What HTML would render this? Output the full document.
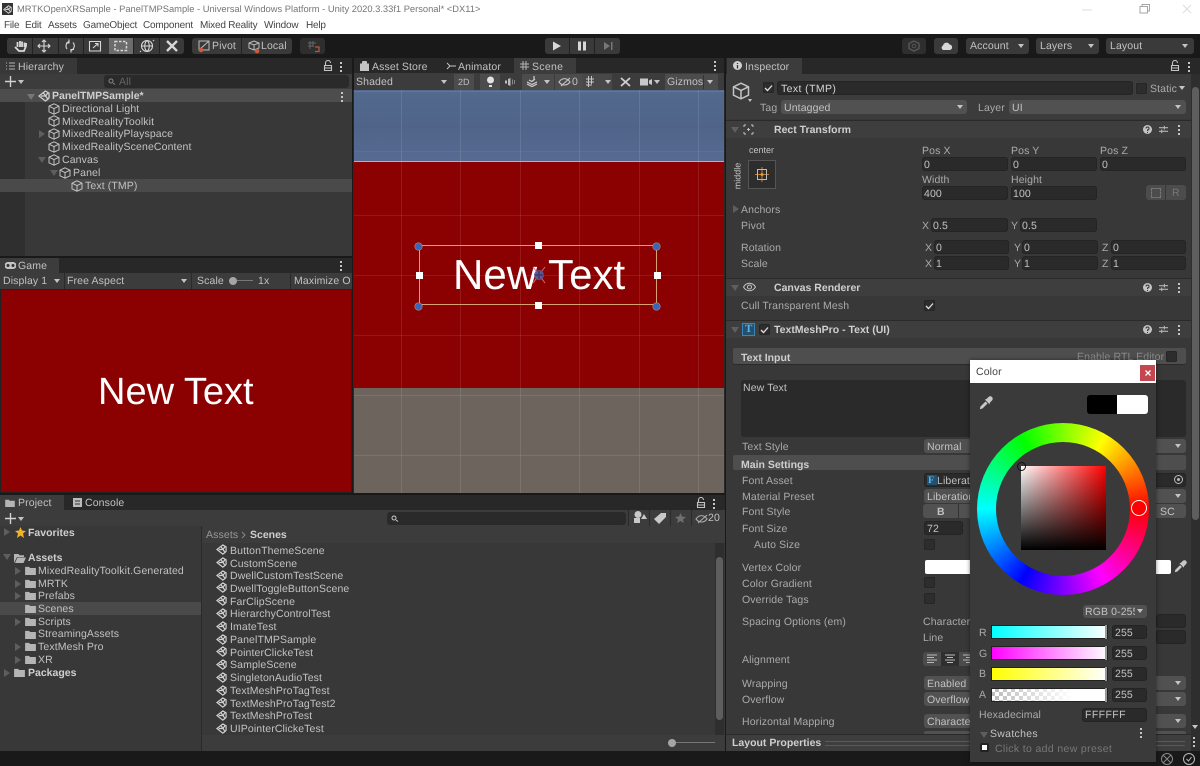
<!DOCTYPE html>
<html><head><meta charset="utf-8">
<style>
html,body{margin:0;padding:0;width:1200px;height:766px;overflow:hidden;background:#191919}
#r{position:relative;width:1200px;height:766px;overflow:hidden;font:10.5px/14px "Liberation Sans",sans-serif;color:#c2c2c2;text-rendering:geometricPrecision;filter:blur(.25px)}
#r div,#r span,#r svg{position:absolute}
.t{white-space:nowrap;letter-spacing:.12px;line-height:14px;margin-top:1px}
.m{color:#444;font-size:10px;letter-spacing:-.2px}
.b{font-weight:bold;color:#cfcfcf;letter-spacing:0}
.f{background:#2a2a2a;border-radius:3px;box-shadow:inset 0 0 0 1px #242424;height:14px}
.p{background:#515151;border-radius:3px;height:14px}
.c{background:#2d2d2d;border-radius:2px;width:11px;height:11px;box-shadow:inset 0 0 0 1px #262626}
.dn{width:0;height:0;border-left:3.5px solid transparent;border-right:3.5px solid transparent;border-top:4px solid #c4c4c4}
.rt{width:0;height:0;border-top:4px solid transparent;border-bottom:4px solid transparent;border-left:6px solid #5e5e5e}
.gd{width:0;height:0;border-left:4px solid transparent;border-right:4px solid transparent;border-top:6px solid #5e5e5e}
.v{background:rgba(255,255,255,.1);width:1px}
.h{background:rgba(255,255,255,.09);height:1px}
.d{width:2px;height:2px;background:#c4c4c4;box-shadow:0 4px 0 #c4c4c4,0 8px 0 #c4c4c4}
.sq{width:7px;height:7px;background:#fff}
.bl{width:7px;height:7px;border-radius:50%;background:#3c66b4;box-shadow:0 0 0 .5px #8aa}
.sl{left:991px;width:117px;height:14px;box-shadow:inset 0 0 0 1px #222}
.sl2{left:1105px;width:2px;height:14px;background:#999}
</style></head><body>
<svg width="0" height="0" style="position:absolute">
<defs>
<symbol id="cube" viewBox="0 0 12 12"><path d="M6 .8 11 3.2V8.8L6 11.2 1 8.8V3.2ZM1 3.2 6 5.6 11 3.2M6 5.6V11.2" fill="none" stroke="#c4c4c4" stroke-width="1"/></symbol>
<symbol id="scn" viewBox="0 0 12 12"><path d="M7.4 1 11 3.1V7.9L9.8 9.3 7.4 11 1 6ZM3 6H7.6L9.7 3M7.6 6 9.7 9M5.5 3 7.6 6" fill="none" stroke="#d0d0d0" stroke-width="1.3"/></symbol>
<symbol id="fld" viewBox="0 0 12 10"><path d="M0 1H4.500L5.500 2.200H12V10H0Z" fill="#b5b5b5"/></symbol>
<symbol id="lock" viewBox="0 0 10 12"><path d="M2.500 5V3A2.500 2.500 0 0 1 7.500 3M1.500 5.500H8.500V10.500H1.500ZM1.500 8H8.500" fill="none" stroke="#c4c4c4" stroke-width="1.100"/></symbol>
<symbol id="set" viewBox="0 0 10 10"><path d="M0 3H10M0 7H10M6 1V5M3 5V9" stroke="#b5b5b5" stroke-width="1.200" fill="none"/></symbol>
<symbol id="pipet" viewBox="0 0 14 14"><path d="M.8 13.200 1.500 10.500 6.500 5.500 8.500 7.500 3.500 12.500Z" fill="#c8c8c8"/><path d="M5.800 3.500 10.500 8.200 11 6.500 13 4.500A1.800 1.800 0 0 0 9.500 1L7.500 3Z" fill="#c8c8c8"/></symbol>
</defs></svg>
<div id="r">
<!-- title / menu -->
<div style="left:0;top:0;width:1200px;height:34px;background:#fff"></div>
<div style="left:2px;top:3px;width:11px;height:12px;background:#333"></div>
<svg style="left:3px;top:5px" width="9" height="9"><use href="#scn"/></svg>
<span class="t" style="left:17px;top:1px;color:#757575;font-size:9.35px;letter-spacing:0">MRTKOpenXRSample - PanelTMPSample - Universal Windows Platform - Unity 2020.3.33f1 Personal* &lt;DX11&gt;</span>
<span class="t m" style="left:4px;top:18px">File</span>
<span class="t m" style="left:25px;top:18px">Edit</span>
<span class="t m" style="left:48px;top:18px">Assets</span>
<span class="t m" style="left:83px;top:18px">GameObject</span>
<span class="t m" style="left:143px;top:18px">Component</span>
<span class="t m" style="left:200px;top:18px">Mixed Reality</span>
<span class="t m" style="left:264px;top:18px">Window</span>
<span class="t m" style="left:306px;top:18px">Help</span>
<svg style="left:1082px;top:4px" width="110" height="11" fill="none"><path d="M0 6H10M101 1 109 9M109 1 101 9" stroke="#ddd"/><path d="M58 2.500H65.500V9H58ZM60 2.500V.5H67.500V7H65.500" stroke="#a5a5a5"/></svg>
<!-- toolbar -->
<div style="left:0;top:34px;width:1200px;height:24px;background:#191919"></div>
<div style="left:7px;top:38px;width:177px;height:16px;background:#3a3a3a;border-radius:3px"></div>
<div style="left:109px;top:38px;width:24px;height:16px;background:#6c6c6c"></div>
<div style="left:32px;top:38px;width:1px;height:16px;background:#222;box-shadow:26px 0 0 #222,51px 0 0 #222,101px 0 0 #222,127px 0 0 #222"></div>
<svg style="left:7px;top:38px" width="177" height="16" fill="none" stroke="#d8d8d8" stroke-width="1.100">
<path d="M8 9 12 13H17L19 8V5M10.500 9V4M13 9V3M15 9V3.500M17.500 9V4.500" stroke-width="1.800"/>
<path d="M31 8H43M37 2V14M35 4 37 2 39 4M35 12 37 14 39 12M33 6 31 8 33 10M41 6 43 8 41 10"/>
<path d="M60 11A5 5 0 0 1 62 3.500M66 4.500A5 5 0 0 1 64 12.500M62 1.500V5H59M64 14.500V11.500H67"/>
<path d="M82.500 3.500H93.500V13H82.500ZM86 10 91 5.500M88 5.500H91V8.500"/>
<path d="M108 3.500H119.500V12.500H108Z" stroke-dasharray="2.500 1.500" stroke-width="1.500"/>
<circle cx="140" cy="8" r="5.500"/><path d="M134.500 8H145.500M140 2.500C137 5 137 11 140 13.500M140 2.500C143 5 143 11 140 13.500M146 2 147 3M133 13 134 14"/>
<path d="M160 3 170 13M170 3 160 13" stroke-width="2.300"/>
</svg>
<div style="left:192px;top:38px;width:100px;height:16px;background:#3a3a3a;border-radius:3px"></div>
<div style="left:241px;top:38px;width:1px;height:16px;background:#222"></div>
<svg style="left:198px;top:40px" width="14" height="14" fill="none"><path d="M1 1H11V10H1ZM1 10 11 1" stroke="#bdbdbd"/><circle cx="3" cy="10" r="2.300" fill="#d05a3c"/></svg>
<span class="t" style="left:212px;top:38px">Pivot</span>
<svg style="left:248px;top:40px" width="14" height="14" fill="none"><path d="M6 1 11 3V8L6 10 1 8V3ZM1 3 6 5 11 3M6 5V10" stroke="#bdbdbd"/><circle cx="9" cy="11" r="2.300" fill="#d05a3c"/></svg>
<span class="t" style="left:261px;top:38px">Local</span>
<div style="left:300px;top:38px;width:25px;height:16px;background:#2e2e2e;border-radius:3px"></div>
<svg style="left:307px;top:40px" width="13" height="13" fill="none"><path d="M1 3H9M1 6H6M3 1V9M6 1V7" stroke="#666"/><path d="M8 7H12V11.500H8" stroke="#b45a3c" stroke-width="1.300"/></svg>
<div style="left:545px;top:38px;width:75px;height:16px;background:#3a3a3a;border-radius:3px"></div>
<div style="left:569px;top:38px;width:1px;height:16px;background:#222;box-shadow:25px 0 0 #222"></div>
<svg style="left:545px;top:38px" width="75" height="16"><path d="M8 3.500 16 8 8 12.500Z" fill="#d8d8d8"/><path d="M33 3.500H36V12.500H33ZM38 3.500H41V12.500H38Z" fill="#d8d8d8"/><path d="M59 4 65 8 59 12ZM66 4H67.500V12H66Z" fill="#777"/></svg>
<div style="left:902px;top:38px;width:24px;height:16px;background:#2e2e2e;border-radius:3px"></div>
<svg style="left:908px;top:40px" width="12" height="12" fill="none"><path d="M6 1 11 3.500V8.500L6 11 1 8.500V3.500Z" stroke="#555" stroke-width="1.500"/><circle cx="6" cy="6" r="1.800" stroke="#555"/></svg>
<div style="left:934px;top:38px;width:24px;height:16px;background:#3a3a3a;border-radius:3px"></div>
<svg style="left:940px;top:41px" width="13" height="10"><path d="M3 9A2.500 2.500 0 0 1 3 4.500 3.500 3.500 0 0 1 9.500 3.500 2.800 2.800 0 0 1 10 9Z" fill="#d8d8d8"/></svg>
<div style="left:966px;top:38px;width:63px;height:16px;background:#3a3a3a;border-radius:3px"></div>
<span class="t" style="left:970px;top:38px">Account</span><div class="dn" style="left:1018px;top:44px"></div>
<div style="left:1036px;top:38px;width:63px;height:16px;background:#3a3a3a;border-radius:3px"></div>
<span class="t" style="left:1040px;top:38px">Layers</span><div class="dn" style="left:1088px;top:44px"></div>
<div style="left:1106px;top:38px;width:88px;height:16px;background:#3a3a3a;border-radius:3px"></div>
<span class="t" style="left:1110px;top:38px">Layout</span><div class="dn" style="left:1182px;top:44px"></div>

<!-- Hierarchy -->
<div style="left:0;top:58px;width:352px;height:198px;background:#383838"></div>
<div style="left:0;top:58px;width:352px;height:16px;background:#282828"></div>
<div style="left:0;top:58px;width:77px;height:16px;background:#383838"></div>
<svg style="left:6px;top:62px" width="9" height="8"><path d="M0 1H1M3 1H9M0 4H1M3 4H9M0 7H1M3 7H9" stroke="#b5b5b5"/></svg>
<span class="t" style="left:18px;top:59px">Hierarchy</span>
<svg style="left:323px;top:60px" width="10" height="12"><use href="#lock"/></svg>
<div class="d" style="left:340px;top:62px"></div>
<div style="left:0;top:74px;width:352px;height:15px;background:#3c3c3c"></div>
<svg style="left:5px;top:76px" width="11" height="11"><path d="M5.500 0V11M0 5.500H11" stroke="#d0d0d0" stroke-width="1.400"/></svg>
<div class="dn" style="left:18px;top:80px"></div>
<div style="left:104px;top:75px;width:245px;height:13px;background:#2a2a2a;border-radius:3px"></div>
<span class="t" style="left:119px;top:74px;color:#666">All</span>
<svg style="left:108px;top:78px" width="8" height="7" fill="none"><circle cx="3" cy="3" r="2" stroke="#888"/><path d="M5 5 7 6.500" stroke="#888"/></svg>
<div style="left:0;top:89px;width:25px;height:167px;background:#2f2f2f"></div>
<div style="left:0;top:89px;width:352px;height:13px;background:#4d4d4d"></div>
<div style="left:0;top:179px;width:352px;height:13px;background:#4a4a4a"></div>
<div class="gd" style="left:27px;top:94px;border-top-color:#777"></div>
<svg style="left:38px;top:90px" width="12" height="12"><use href="#scn"/></svg>
<span class="t b" style="left:52px;top:88px">PanelTMPSample*</span>
<div class="d" style="left:341px;top:92px"></div>
<svg style="left:48px;top:103px" width="12" height="12"><use href="#cube"/></svg><span class="t" style="left:62px;top:101px">Directional Light</span>
<svg style="left:48px;top:115px" width="12" height="12"><use href="#cube"/></svg><span class="t" style="left:62px;top:114px">MixedRealityToolkit</span>
<div class="rt" style="left:39px;top:130px"></div>
<svg style="left:48px;top:128px" width="12" height="12"><use href="#cube"/></svg><span class="t" style="left:62px;top:126px">MixedRealityPlayspace</span>
<svg style="left:48px;top:141px" width="12" height="12"><use href="#cube"/></svg><span class="t" style="left:62px;top:139px">MixedRealitySceneContent</span>
<div class="gd" style="left:38px;top:157px"></div>
<svg style="left:48px;top:154px" width="12" height="12"><use href="#cube"/></svg><span class="t" style="left:62px;top:152px">Canvas</span>
<div class="gd" style="left:50px;top:170px"></div>
<svg style="left:59px;top:167px" width="12" height="12"><use href="#cube"/></svg><span class="t" style="left:73px;top:165px">Panel</span>
<svg style="left:71px;top:180px" width="12" height="12"><use href="#cube"/></svg><span class="t" style="left:85px;top:178px">Text (TMP)</span>

<!-- Game -->
<div style="left:0;top:258px;width:352px;height:235px;background:#3c3c3c"></div>
<div style="left:0;top:258px;width:352px;height:15px;background:#282828"></div>
<div style="left:0;top:258px;width:59px;height:15px;background:#3c3c3c"></div>
<svg style="left:5px;top:262px" width="11" height="7"><path d="M3 0H8A3 3 0 0 1 8 7H3A3 3 0 0 1 3 0Z" fill="#c4c4c4"/><circle cx="3" cy="3.500" r="1.500" fill="#333"/><circle cx="8" cy="3.500" r="1.500" fill="#333"/></svg>
<span class="t" style="left:18px;top:258px">Game</span>
<div class="d" style="left:340px;top:261px"></div>
<span class="t" style="left:3px;top:273px">Display 1</span><div class="dn" style="left:54px;top:279px"></div>
<span class="t" style="left:67px;top:273px">Free Aspect</span><div class="dn" style="left:181px;top:279px"></div>
<div style="left:64px;top:273px;width:1px;height:16px;background:#2a2a2a;box-shadow:127px 0 0 #2a2a2a,226px 0 0 #2a2a2a"></div>
<span class="t" style="left:197px;top:273px">Scale</span>
<div style="left:229px;top:280px;width:24px;height:1px;background:#777"></div>
<div style="left:229px;top:277px;width:8px;height:8px;border-radius:50%;background:#a5a5a5"></div>
<span class="t" style="left:258px;top:273px">1x</span>
<div style="left:294px;top:273px;width:57px;height:15px;overflow:hidden"><span class="t" style="left:0;top:0">Maximize On Play</span></div>
<div style="left:0;top:289px;width:352px;height:204px;background:#222"></div>
<div style="left:1px;top:290px;width:350px;height:202px;background:#8b0000"></div>
<span class="t" style="left:98px;top:368px;font-size:38px;line-height:46px;color:#fff;letter-spacing:0">New Text</span>

<!-- Scene -->
<div style="left:354px;top:58px;width:370px;height:32px;background:#282828"></div>
<svg style="left:360px;top:61px" width="9" height="10"><path d="M0 3H9V10H0ZM2.500 3V1.500A2 2 0 0 1 6.500 1.500V3" fill="#c4c4c4" stroke="#c4c4c4"/></svg>
<span class="t" style="left:372px;top:59px">Asset Store</span>
<svg style="left:446px;top:62px" width="10" height="8" fill="none"><path d="M1 1 4 4 1 7M4 4H10" stroke="#c4c4c4"/></svg>
<span class="t" style="left:458px;top:59px">Animator</span>
<div style="left:514px;top:58px;width:62px;height:15px;background:#3c3c3c"></div>
<svg style="left:520px;top:61px" width="9" height="9"><path d="M0 3H9M0 6H9M3 0V9M6 0V9" stroke="#b5b5b5"/></svg>
<span class="t" style="left:532px;top:59px;letter-spacing:.3px">Scene</span>
<div class="d" style="left:714px;top:61px"></div>
<div style="left:354px;top:73px;width:370px;height:17px;background:#3c3c3c"></div>
<span class="t" style="left:356px;top:74px">Shaded</span><div class="dn" style="left:441px;top:80px"></div>
<div style="left:454px;top:74px;width:20px;height:16px;background:#4c4c4c"></div>
<span class="t" style="left:458px;top:74px;font-size:9px;letter-spacing:0">2D</span>
<div style="left:480px;top:74px;width:20px;height:16px;background:#4c4c4c"></div>
<svg style="left:486px;top:76px" width="9" height="12"><circle cx="4.500" cy="4" r="3.500" fill="#e2e2e2"/><path d="M3 9H6V11H3Z" fill="#e2e2e2"/></svg>
<svg style="left:505px;top:78px" width="11" height="8"><path d="M0 2.500H2V5.500H0ZM3 1 5.500 0V8L3 7Z" fill="#bbb"/><path d="M7.500 1.500V6.500M9.500 2V6" stroke="#888"/></svg>
<div style="left:522px;top:74px;width:32px;height:16px;background:#4c4c4c"></div>
<svg style="left:526px;top:76px" width="13" height="11" fill="none"><path d="M1 6 6 8.500 11 6M1 8 6 10.500 11 8M3 4 6 5.500 9 3M8 0V4" stroke="#d0d0d0" stroke-width="1.200"/></svg>
<div class="dn" style="left:544px;top:80px"></div>
<div style="left:555px;top:74px;width:27px;height:16px;background:#4c4c4c"></div>
<svg style="left:558px;top:77px" width="14" height="10" fill="none"><path d="M1 5C4 .5 9 .5 12 5 9 9 4 9 1 5ZM3 9 12 1" stroke="#c8c8c8" stroke-width="1.100"/></svg>
<span class="t" style="left:572px;top:74px">0</span>
<div style="left:582px;top:74px;width:30px;height:16px;background:#484848"></div>
<svg style="left:586px;top:76px" width="11" height="12" fill="none"><path d="M0 3H8M0 6H8M0 9H6M2.500 0V11M5.500 0V8" stroke="#c8c8c8"/></svg>
<div class="dn" style="left:605px;top:80px"></div>
<svg style="left:620px;top:77px" width="11" height="10"><path d="M1 1 10 9M10 1 1 9" stroke="#d0d0d0" stroke-width="1.800"/></svg>
<svg style="left:640px;top:78px" width="12" height="8"><path d="M0 .5H8V7.500H0ZM9 2.500 12 1V7L9 5.500Z" fill="#c8c8c8"/></svg>
<div class="dn" style="left:654px;top:80px"></div>
<div style="left:665px;top:74px;width:53px;height:16px;background:#4c4c4c"></div>
<span class="t" style="left:667px;top:74px">Gizmos</span><div class="dn" style="left:707px;top:80px"></div>
<div style="left:703px;top:75px;width:1px;height:14px;background:#333"></div>

<div style="left:353px;top:90px;width:372px;height:403px;background:#2a2a2a"></div>
<div style="left:354px;top:90px;width:370px;height:71px;background:linear-gradient(#526a8e,#4f6488 50%,#566b92)"></div>
<div style="left:354px;top:161px;width:370px;height:1px;background:#b0b0c8"></div>
<div style="left:354px;top:162px;width:370px;height:226px;background:#8b0000"></div>
<div style="left:354px;top:388px;width:370px;height:105px;background:#6d645e"></div>
<div class="v" style="left:401px;top:90px;height:403px"></div>
<div class="v" style="left:460px;top:90px;height:403px"></div>
<div class="v" style="left:520px;top:90px;height:403px"></div>
<div class="v" style="left:579px;top:90px;height:403px"></div>
<div class="v" style="left:639px;top:90px;height:403px"></div>
<div class="v" style="left:698px;top:90px;height:403px"></div>
<div class="h" style="left:354px;top:91px;width:370px"></div>
<div class="h" style="left:354px;top:151px;width:370px;opacity:.5"></div>
<div class="h" style="left:354px;top:215px;width:370px"></div>
<div class="h" style="left:354px;top:275px;width:370px"></div>
<div class="h" style="left:354px;top:335px;width:370px"></div>
<div class="h" style="left:354px;top:395px;width:370px"></div>
<div class="h" style="left:354px;top:455px;width:370px"></div>
<span class="t" style="left:453px;top:249px;font-size:42px;line-height:50px;color:#fff;letter-spacing:.03px">New Text</span>
<div style="left:419px;top:245px;width:238px;height:60px;border:1px solid #dca070;box-sizing:border-box"></div>
<svg style="left:528px;top:264px" width="22" height="22" fill="none"><path d="M5 3 17 19M17 3 5 19" stroke="#d87070" stroke-width="1"/><circle cx="11" cy="11" r="5" fill="#5a5a9c" opacity=".9"/><path d="M7 11H15M11 7V15" stroke="#2d2d60"/></svg>
<div class="sq" style="left:535px;top:242px"></div>
<div class="sq" style="left:535px;top:302px"></div>
<div class="sq" style="left:416px;top:272px"></div>
<div class="sq" style="left:654px;top:272px"></div>
<div class="bl" style="left:415px;top:243px"></div>
<div class="bl" style="left:653px;top:243px"></div>
<div class="bl" style="left:415px;top:303px"></div>
<div class="bl" style="left:653px;top:303px"></div>

<!-- Project -->
<div style="left:0;top:495px;width:725px;height:256px;background:#383838"></div>
<div style="left:0;top:495px;width:725px;height:15px;background:#282828"></div>
<div style="left:0;top:495px;width:64px;height:15px;background:#3c3c3c"></div>
<svg style="left:5px;top:499px" width="10" height="8"><use href="#fld"/></svg>
<span class="t" style="left:18px;top:495px">Project</span>
<svg style="left:73px;top:498px" width="9" height="9"><path d="M0 0H9V9H0Z" fill="#bbb"/><path d="M2 3H7M2 6H7" stroke="#333"/></svg>
<span class="t" style="left:85px;top:495px">Console</span>
<svg style="left:696px;top:497px" width="10" height="12"><use href="#lock"/></svg>
<div class="d" style="left:713px;top:499px"></div>
<div style="left:0;top:510px;width:725px;height:16px;background:#3c3c3c"></div>
<svg style="left:5px;top:513px" width="11" height="11"><path d="M5.500 0V11M0 5.500H11" stroke="#d0d0d0" stroke-width="1.400"/></svg>
<div class="dn" style="left:18px;top:517px"></div>
<div style="left:387px;top:512px;width:239px;height:13px;background:#2a2a2a;border-radius:3px"></div>
<svg style="left:391px;top:515px" width="8" height="7" fill="none"><circle cx="3" cy="3" r="2" stroke="#ccc"/><path d="M5 5 7 6.500" stroke="#ccc"/></svg>
<div style="left:628px;top:510px;width:1px;height:16px;background:#2a2a2a;box-shadow:21px 0 0 #2a2a2a,42px 0 0 #2a2a2a,63px 0 0 #2a2a2a"></div>
<svg style="left:633px;top:511px" width="14" height="13"><circle cx="5" cy="3.500" r="3.500" fill="#c8c8c8"/><rect x="1" y="7" width="6" height="5" fill="#c8c8c8"/><path d="M8 8 11 3 14 8Z" fill="#c8c8c8"/></svg>
<svg style="left:654px;top:513px" width="13" height="11"><path d="M0 6 7 0H12V4L5 11Z" fill="#c8c8c8"/></svg>
<svg style="left:675px;top:513px" width="11" height="10"><path d="M5.500 0 7 3.500 11 4 8 6.500 9 10 5.500 8 2 10 3 6.500 0 4 4 3.500Z" fill="#6f6f6f"/></svg>
<svg style="left:695px;top:514px" width="14" height="10" fill="none"><path d="M1 5C4 .5 9 .5 12 5 9 9 4 9 1 5ZM3 9 12 1" stroke="#aaa" stroke-width="1.100"/></svg>
<span class="t" style="left:708px;top:510px">20</span>
<div class="rt" style="left:4px;top:528px"></div>
<svg style="left:15px;top:527px" width="11" height="11"><path d="M5.500 0 7 3.500 11 4 8 6.500 9 11 5.500 8.500 2 11 3 6.500 0 4 4 3.500Z" fill="#f0b428"/></svg>
<span class="t b" style="left:28px;top:525px">Favorites</span>
<div class="gd" style="left:3px;top:554px"></div>
<svg style="left:14px;top:553px" width="12" height="10"><path d="M0 1H4.500L5.500 2.200H10V4H3L0 10ZM3.500 4.500H12L9.500 10H1Z" fill="#b5b5b5"/></svg>
<span class="t b" style="left:28px;top:550px">Assets</span>
<div class="rt" style="left:15px;top:567px"></div><svg style="left:25px;top:566px" width="11" height="9"><use href="#fld"/></svg><span class="t" style="left:38px;top:563px">MixedRealityToolkit.Generated</span>
<div class="rt" style="left:15px;top:580px"></div><svg style="left:25px;top:579px" width="11" height="9"><use href="#fld"/></svg><span class="t" style="left:38px;top:576px">MRTK</span>
<div class="rt" style="left:15px;top:592px"></div><svg style="left:25px;top:591px" width="11" height="9"><use href="#fld"/></svg><span class="t" style="left:38px;top:588px">Prefabs</span>
<div style="left:0;top:602px;width:202px;height:13px;background:#4a4a4a"></div>
<svg style="left:25px;top:604px" width="11" height="9"><use href="#fld"/></svg><span class="t" style="left:38px;top:601px">Scenes</span>
<div class="rt" style="left:15px;top:618px"></div><svg style="left:25px;top:617px" width="11" height="9"><use href="#fld"/></svg><span class="t" style="left:38px;top:614px">Scripts</span>
<svg style="left:25px;top:630px" width="11" height="9"><use href="#fld"/></svg><span class="t" style="left:38px;top:626px">StreamingAssets</span>
<div class="rt" style="left:15px;top:643px"></div><svg style="left:25px;top:642px" width="11" height="9"><use href="#fld"/></svg><span class="t" style="left:38px;top:639px">TextMesh Pro</span>
<div class="rt" style="left:15px;top:656px"></div><svg style="left:25px;top:655px" width="11" height="9"><use href="#fld"/></svg><span class="t" style="left:38px;top:652px">XR</span>
<div class="rt" style="left:4px;top:669px"></div><svg style="left:14px;top:668px" width="11" height="9"><use href="#fld"/></svg>
<span class="t b" style="left:28px;top:665px">Packages</span>
<div style="left:201px;top:526px;width:1px;height:225px;background:#2a2a2a"></div>
<div style="left:202px;top:526px;width:523px;height:17px;background:#3c3c3c"></div>
<span class="t" style="left:206px;top:527px;color:#999">Assets</span>
<svg style="left:241px;top:531px" width="5" height="8" fill="none"><path d="M1 1 4 4 1 7" stroke="#888"/></svg>
<span class="t b" style="left:250px;top:527px">Scenes</span>
<div style="left:202px;top:543px;width:513px;height:192px;background:#383838"></div>
<div style="left:715px;top:543px;width:9px;height:192px;background:#2e2e2e"></div>
<div style="left:716px;top:557px;width:7px;height:163px;background:#5e5e5e;border-radius:4px"></div>
<div style="left:202px;top:735px;width:523px;height:16px;background:#3c3c3c"></div>
<div style="left:668px;top:742px;width:47px;height:1px;background:#777"></div>
<div style="left:668px;top:739px;width:8px;height:8px;border-radius:50%;background:#a5a5a5"></div>
<svg style="left:216px;top:544px" width="11" height="11"><use href="#scn"/></svg><span class="t" style="left:230px;top:543px">ButtonThemeScene</span>
<svg style="left:216px;top:557px" width="11" height="11"><use href="#scn"/></svg><span class="t" style="left:230px;top:556px">CustomScene</span>
<svg style="left:216px;top:570px" width="11" height="11"><use href="#scn"/></svg><span class="t" style="left:230px;top:568px">DwellCustomTestScene</span>
<svg style="left:216px;top:582px" width="11" height="11"><use href="#scn"/></svg><span class="t" style="left:230px;top:581px">DwellToggleButtonScene</span>
<svg style="left:216px;top:595px" width="11" height="11"><use href="#scn"/></svg><span class="t" style="left:230px;top:594px">FarClipScene</span>
<svg style="left:216px;top:608px" width="11" height="11"><use href="#scn"/></svg><span class="t" style="left:230px;top:606px">HierarchyControlTest</span>
<svg style="left:216px;top:621px" width="11" height="11"><use href="#scn"/></svg><span class="t" style="left:230px;top:619px">ImateTest</span>
<svg style="left:216px;top:634px" width="11" height="11"><use href="#scn"/></svg><span class="t" style="left:230px;top:632px">PanelTMPSample</span>
<svg style="left:216px;top:646px" width="11" height="11"><use href="#scn"/></svg><span class="t" style="left:230px;top:645px">PointerClickeTest</span>
<svg style="left:216px;top:659px" width="11" height="11"><use href="#scn"/></svg><span class="t" style="left:230px;top:657px">SampleScene</span>
<svg style="left:216px;top:672px" width="11" height="11"><use href="#scn"/></svg><span class="t" style="left:230px;top:670px">SingletonAudioTest</span>
<svg style="left:216px;top:685px" width="11" height="11"><use href="#scn"/></svg><span class="t" style="left:230px;top:683px">TextMeshProTagTest</span>
<svg style="left:216px;top:697px" width="11" height="11"><use href="#scn"/></svg><span class="t" style="left:230px;top:696px">TextMeshProTagTest2</span>
<svg style="left:216px;top:710px" width="11" height="11"><use href="#scn"/></svg><span class="t" style="left:230px;top:708px">TextMeshProTest</span>
<svg style="left:216px;top:723px" width="11" height="11"><use href="#scn"/></svg><span class="t" style="left:230px;top:721px">UIPointerClickeTest</span>

<!-- Inspector -->
<div style="left:726px;top:58px;width:474px;height:693px;background:#383838"></div>
<div style="left:726px;top:58px;width:474px;height:16px;background:#282828"></div>
<div style="left:727px;top:58px;width:75px;height:16px;background:#3c3c3c"></div>
<svg style="left:733px;top:61px" width="9" height="9"><circle cx="4.500" cy="4.500" r="4.500" fill="#d0d0d0"/><path d="M4.500 2V3M4.500 4V7.500" stroke="#333" stroke-width="1.300"/></svg>
<span class="t" style="left:745px;top:59px">Inspector</span>
<svg style="left:1170px;top:60px" width="10" height="12"><use href="#lock"/></svg>
<div class="d" style="left:1188px;top:62px"></div>
<div style="left:726px;top:74px;width:465px;height:45px;background:#3c3c3c"></div>
<svg style="left:732px;top:82px" width="18" height="18"><use href="#cube"/></svg>
<div class="dn" style="left:748px;top:99px;border-left-width:2.500px;border-right-width:2.500px;border-top-width:3px"></div>
<div class="c" style="left:763px;top:82px"></div>
<svg style="left:764px;top:84px" width="9" height="8" fill="none"><path d="M1 4 3.500 6.500 8 1.500" stroke="#e0e0e0" stroke-width="1.300"/></svg>
<div class="f" style="left:777px;top:81px;width:356px"></div>
<span class="t" style="left:781px;top:81px;color:#d4d4d4;letter-spacing:.4px">Text (TMP)</span>
<div class="c" style="left:1136px;top:83px"></div>
<span class="t" style="left:1150px;top:81px;color:#aaa">Static</span>
<div class="dn" style="left:1179px;top:86px"></div>
<span class="t" style="left:760px;top:100px;color:#aaa">Tag</span>
<div class="p" style="left:781px;top:100px;width:186px"></div>
<span class="t" style="left:784px;top:100px">Untagged</span><div class="dn" style="left:957px;top:105px"></div>
<span class="t" style="left:978px;top:100px;color:#aaa">Layer</span>
<div class="p" style="left:1009px;top:100px;width:177px"></div>
<span class="t" style="left:1012px;top:100px">UI</span><div class="dn" style="left:1175px;top:105px"></div>
<div style="left:726px;top:120px;width:465px;height:1px;background:#2a2a2a"></div>
<div style="left:726px;top:121px;width:465px;height:17px;background:#3e3e3e"></div>
<div class="gd" style="left:731px;top:127px"></div>
<svg style="left:743px;top:124px" width="11" height="11"><path d="M1 1H3M8 1H10M1 10H3M8 10H10M1 1V3M10 1V3M1 8V10M10 8V10M5.500 4V7M4 5.500H7" stroke="#c4c4c4"/></svg>
<span class="t b" style="left:774px;top:122px">Rect Transform</span>
<svg style="left:1143px;top:125px" width="9" height="9"><circle cx="4.500" cy="4.500" r="4.500" fill="#c4c4c4"/><path d="M3 3.500A1.500 1.500 0 1 1 4.500 5V6M4.500 7V8" stroke="#333" fill="none"/></svg>
<svg style="left:1159px;top:125px" width="9" height="9"><use href="#set"/></svg>
<div class="d" style="left:1178px;top:125px"></div>
<span class="t" style="left:749px;top:142px;font-size:9px;letter-spacing:0">center</span>
<span class="t" style="left:724px;top:168px;font-size:9px;letter-spacing:0;transform:rotate(-90deg)">middle</span>
<div style="left:748px;top:160px;width:28px;height:29px;background:#2d2d2d;box-shadow:inset 0 0 0 1px #555"></div>
<svg style="left:748px;top:160px" width="28" height="29" fill="none"><path d="M7 14.500H21M14 7V22" stroke="#c87a2c"/><rect x="9.500" y="9.500" width="9" height="10" stroke="#bbb"/><circle cx="14" cy="14.500" r="1.500" fill="#d0a040"/></svg>
<span class="t" style="left:922px;top:143px;color:#aaa">Pos X</span>
<span class="t" style="left:1011px;top:143px;color:#aaa">Pos Y</span>
<span class="t" style="left:1100px;top:143px;color:#aaa">Pos Z</span>
<div class="f" style="left:922px;top:157px;width:86px"></div><span class="t" style="left:924px;top:157px">0</span>
<div class="f" style="left:1011px;top:157px;width:86px"></div><span class="t" style="left:1013px;top:157px">0</span>
<div class="f" style="left:1100px;top:157px;width:86px"></div><span class="t" style="left:1102px;top:157px">0</span>
<span class="t" style="left:922px;top:172px;color:#aaa">Width</span>
<span class="t" style="left:1011px;top:172px;color:#aaa">Height</span>
<div class="f" style="left:922px;top:186px;width:86px"></div><span class="t" style="left:924px;top:186px">400</span>
<div class="f" style="left:1011px;top:186px;width:86px"></div><span class="t" style="left:1013px;top:186px">100</span>
<div style="left:1146px;top:185px;width:40px;height:15px;background:#4c4c4c;border-radius:3px"></div>
<div style="left:1165px;top:185px;width:1px;height:15px;background:#383838"></div>
<div style="left:1151px;top:188px;width:8px;height:8px;border:1px dashed #777"></div>
<span class="t" style="left:1172px;top:185px;color:#777">R</span>
<div class="rt" style="left:733px;top:205px"></div>
<span class="t" style="left:741px;top:202px;color:#aaa">Anchors</span>
<span class="t" style="left:741px;top:218px;color:#aaa">Pivot</span>
<span class="t" style="left:922px;top:218px;color:#aaa">X</span><div class="f" style="left:931px;top:218px;width:77px"></div><span class="t" style="left:933px;top:218px">0.5</span>
<span class="t" style="left:1011px;top:218px;color:#aaa">Y</span><div class="f" style="left:1020px;top:218px;width:77px"></div><span class="t" style="left:1022px;top:218px">0.5</span>
<span class="t" style="left:741px;top:240px;color:#aaa">Rotation</span>
<span class="t" style="left:925px;top:240px;color:#aaa">X</span><div class="f" style="left:934px;top:240px;width:75px"></div><span class="t" style="left:936px;top:240px">0</span>
<span class="t" style="left:1014px;top:240px;color:#aaa">Y</span><div class="f" style="left:1022px;top:240px;width:76px"></div><span class="t" style="left:1024px;top:240px">0</span>
<span class="t" style="left:1102px;top:240px;color:#aaa">Z</span><div class="f" style="left:1111px;top:240px;width:75px"></div><span class="t" style="left:1113px;top:240px">0</span>
<span class="t" style="left:741px;top:256px;color:#aaa">Scale</span>
<span class="t" style="left:925px;top:256px;color:#aaa">X</span><div class="f" style="left:934px;top:256px;width:75px"></div><span class="t" style="left:936px;top:256px">1</span>
<span class="t" style="left:1014px;top:256px;color:#aaa">Y</span><div class="f" style="left:1022px;top:256px;width:76px"></div><span class="t" style="left:1024px;top:256px">1</span>
<span class="t" style="left:1102px;top:256px;color:#aaa">Z</span><div class="f" style="left:1111px;top:256px;width:75px"></div><span class="t" style="left:1113px;top:256px">1</span>
<div style="left:726px;top:278px;width:465px;height:1px;background:#2a2a2a"></div>
<div style="left:726px;top:279px;width:465px;height:17px;background:#3e3e3e"></div>
<div class="gd" style="left:731px;top:285px"></div>
<svg style="left:743px;top:282px" width="13" height="10" fill="none"><path d="M.5 5C3.500 0 9.500 0 12.500 5 9.500 10 3.500 10 .5 5Z" stroke="#c4c4c4"/><circle cx="6.500" cy="5" r="2" stroke="#c4c4c4"/></svg>
<span class="t b" style="left:774px;top:280px">Canvas Renderer</span>
<svg style="left:1143px;top:283px" width="9" height="9"><circle cx="4.500" cy="4.500" r="4.500" fill="#c4c4c4"/><path d="M3 3.500A1.500 1.500 0 1 1 4.500 5V6M4.500 7V8" stroke="#333" fill="none"/></svg>
<svg style="left:1159px;top:283px" width="9" height="9"><use href="#set"/></svg>
<div class="d" style="left:1178px;top:283px"></div>
<span class="t" style="left:741px;top:298px;color:#aaa">Cull Transparent Mesh</span>
<div class="c" style="left:924px;top:300px"></div>
<svg style="left:925px;top:302px" width="9" height="8" fill="none"><path d="M1 4 3.500 6.500 8 1.500" stroke="#e0e0e0" stroke-width="1.300"/></svg>
<div style="left:726px;top:320px;width:465px;height:1px;background:#2a2a2a"></div>
<div style="left:726px;top:321px;width:465px;height:17px;background:#3e3e3e"></div>
<div class="gd" style="left:731px;top:327px"></div>
<div style="left:742px;top:323px;width:13px;height:13px;background:#24506c;box-shadow:inset 0 0 0 1px #3a86b8"></div>
<span class="t" style="left:745px;top:321px;color:#58b4e8;font:bold 11px/14px 'Liberation Serif',serif">T</span>
<div class="c" style="left:759px;top:324px"></div>
<svg style="left:760px;top:326px" width="9" height="8" fill="none"><path d="M1 4 3.500 6.500 8 1.500" stroke="#e0e0e0" stroke-width="1.300"/></svg>
<span class="t b" style="left:774px;top:322px">TextMeshPro - Text (UI)</span>
<svg style="left:1143px;top:325px" width="9" height="9"><circle cx="4.500" cy="4.500" r="4.500" fill="#c4c4c4"/><path d="M3 3.500A1.500 1.500 0 1 1 4.500 5V6M4.500 7V8" stroke="#333" fill="none"/></svg>
<svg style="left:1159px;top:325px" width="9" height="9"><use href="#set"/></svg>
<div class="d" style="left:1178px;top:325px"></div>
<div style="left:733px;top:348px;width:453px;height:16px;background:#4e4e4e;border-radius:2px;box-shadow:0 1px 0 #2a2a2a"></div>
<span class="t b" style="left:741px;top:350px">Text Input</span>
<span class="t" style="left:1077px;top:349px;color:#8a8a8a">Enable RTL Editor</span>
<div class="c" style="left:1166px;top:351px"></div>
<div style="left:741px;top:380px;width:445px;height:57px;background:#2a2a2a;border-radius:3px"></div>
<span class="t" style="left:743px;top:380px">New Text</span>
<span class="t" style="left:742px;top:439px;color:#aaa">Text Style</span>
<div class="p" style="left:924px;top:439px;width:262px"></div><span class="t" style="left:927px;top:439px">Normal</span>
<div class="dn" style="left:1175px;top:444px"></div>
<div style="left:733px;top:455px;width:453px;height:15px;background:#4e4e4e;border-radius:2px"></div>
<span class="t b" style="left:741px;top:457px">Main Settings</span>
<span class="t" style="left:742px;top:473px;color:#aaa">Font Asset</span>
<div class="f" style="left:924px;top:473px;width:262px"></div>
<div style="left:927px;top:475px;width:10px;height:10px;background:#24506c"></div>
<span class="t" style="left:928px;top:473px;color:#58b4e8;font:bold 10px/14px 'Liberation Serif',serif">F</span>
<span class="t" style="left:937px;top:473px">Liberation Sans SDF</span>
<svg style="left:1173px;top:474px" width="11" height="11" fill="none"><circle cx="5.500" cy="5.500" r="4" stroke="#bbb"/><circle cx="5.500" cy="5.500" r="1.500" fill="#bbb"/></svg>
<span class="t" style="left:742px;top:489px;color:#aaa">Material Preset</span>
<div class="p" style="left:924px;top:489px;width:262px"></div><span class="t" style="left:927px;top:489px">Liberation Sans SDF Material</span>
<div class="dn" style="left:1175px;top:494px"></div>
<span class="t" style="left:742px;top:504px;color:#aaa">Font Style</span>
<div class="p" style="left:923px;top:504px;width:263px"></div>
<span class="t" style="left:937px;top:504px;font-weight:bold">B</span>
<span class="t" style="left:1160px;top:504px">SC</span>
<div style="left:958px;top:504px;width:1px;height:14px;background:#333"></div>
<span class="t" style="left:742px;top:521px;color:#aaa">Font Size</span>
<div class="f" style="left:924px;top:521px;width:39px"></div><span class="t" style="left:927px;top:521px">72</span>
<span class="t" style="left:754px;top:537px;color:#aaa">Auto Size</span>
<div class="c" style="left:924px;top:539px"></div>
<span class="t" style="left:742px;top:560px;color:#aaa">Vertex Color</span>
<div style="left:925px;top:560px;width:246px;height:14px;background:#fff;border-radius:2px"></div>
<svg style="left:1174px;top:560px" width="13" height="13"><use href="#pipet"/></svg>
<span class="t" style="left:742px;top:576px;color:#aaa">Color Gradient</span>
<div class="c" style="left:924px;top:577px"></div>
<span class="t" style="left:742px;top:592px;color:#aaa">Override Tags</span>
<div class="c" style="left:924px;top:593px"></div>
<span class="t" style="left:742px;top:614px;color:#aaa">Spacing Options (em)</span>
<span class="t" style="left:923px;top:614px;color:#aaa">Character</span>
<span class="t" style="left:923px;top:630px;color:#aaa">Line</span>
<div class="f" style="left:1156px;top:614px;width:30px"></div>
<div class="f" style="left:1156px;top:630px;width:30px"></div>
<span class="t" style="left:742px;top:652px;color:#aaa">Alignment</span>
<div style="left:923px;top:652px;width:50px;height:14px;background:#4c4c4c;border-radius:3px"></div>
<div style="left:941px;top:652px;width:18px;height:14px;background:#2f2f2f"></div>
<svg style="left:927px;top:654px" width="45" height="10"><path d="M0 1H10M0 3.500H7M0 6H10M0 8.500H7M18 1H28M20 3.500H26M18 6H28M20 8.500H26M36 1H45M39 3.500H45M36 6H45M39 8.500H45" stroke="#bbb"/></svg>
<span class="t" style="left:742px;top:676px;color:#aaa">Wrapping</span>
<div class="p" style="left:924px;top:676px;width:262px"></div><span class="t" style="left:927px;top:676px">Enabled</span>
<div class="dn" style="left:1175px;top:681px"></div>
<span class="t" style="left:742px;top:692px;color:#aaa">Overflow</span>
<div class="p" style="left:924px;top:692px;width:262px"></div><span class="t" style="left:927px;top:692px">Overflow</span>
<div class="dn" style="left:1175px;top:697px"></div>
<span class="t" style="left:742px;top:714px;color:#aaa">Horizontal Mapping</span>
<div class="p" style="left:924px;top:714px;width:262px"></div><span class="t" style="left:927px;top:714px">Character</span>
<div class="dn" style="left:1175px;top:719px"></div>
<div class="p" style="left:924px;top:731px;width:262px;height:4px"></div>
<div style="left:726px;top:734px;width:465px;height:17px;background:#3e3e3e;border-top:1px solid #2a2a2a;box-sizing:border-box"></div>
<span class="t b" style="left:732px;top:735px">Layout Properties</span>
<div style="left:825px;top:741px;width:360px;height:3px;border-top:1px solid #5a5a5a;border-bottom:1px solid #5a5a5a"></div>
<div style="left:1191px;top:74px;width:9px;height:677px;background:#2e2e2e"></div>
<div style="left:1192px;top:87px;width:7px;height:433px;background:#5e5e5e;border-radius:4px"></div>
<div class="d" style="left:1193px;top:737px"></div>
<div class="dn" style="left:1192px;top:725px"></div>

<!-- bottom status icons -->
<svg style="left:1160px;top:752px" width="40" height="14" fill="none"><circle cx="7" cy="7" r="5.500" stroke="#888"/><path d="M3 3 11 11M11 3 3 11" stroke="#888"/><circle cx="29" cy="7" r="5.500" stroke="#bbb"/><path d="M26.500 7 28.500 9 31.500 5" stroke="#bbb"/></svg>

<!-- Color popup -->
<div style="left:970px;top:360px;width:186px;height:402px;background:#3a3a3a;box-shadow:0 0 4px rgba(0,0,0,.5)"></div>
<div style="left:970px;top:360px;width:186px;height:23px;background:#fff"></div>
<span class="t" style="left:976px;top:364px;color:#444">Color</span>
<div style="left:1140px;top:365px;width:15px;height:16px;background:#c4474f"></div>
<svg style="left:1145px;top:370px" width="6" height="6"><path d="M.5 .5 5.500 5.500M5.500 .5 .5 5.500" stroke="#fff" stroke-width="1.300"/></svg>
<svg style="left:979px;top:396px" width="14" height="14"><use href="#pipet"/></svg>
<div style="left:1087px;top:395px;width:30px;height:19px;background:#000;border-radius:3px 0 0 3px"></div>
<div style="left:1117px;top:395px;width:31px;height:19px;background:#fff;border-radius:0 3px 3px 0"></div>
<div style="left:977px;top:423px;width:172px;height:172px;border-radius:50%;background:conic-gradient(from 90deg,#f00,#f0f,#00f,#0ff,#0f0,#ff0,#f00)"></div>
<div style="left:996px;top:442px;width:134px;height:134px;border-radius:50%;background:#3a3a3a"></div>
<div style="left:1021px;top:466px;width:85px;height:84px;background:linear-gradient(transparent,#000),linear-gradient(90deg,#fff,#f00)"></div>
<div style="left:1017px;top:462px;width:7px;height:7px;border-radius:50%;border:1px solid #111"></div>
<div style="left:1131px;top:500px;width:14px;height:14px;border-radius:50%;background:#f00;border:1.500px solid #fff"></div>
<div style="left:1083px;top:605px;width:64px;height:13px;background:#515151;border-radius:3px"></div>
<div style="left:1085px;top:604px;width:50px;height:15px;overflow:hidden"><span class="t" style="left:0;top:0">RGB 0-255</span></div>
<div class="dn" style="left:1137px;top:609px"></div>
<span class="t" style="left:979px;top:625px;color:#aaa">R</span>
<div class="sl" style="top:625px;background:linear-gradient(90deg,#0ff,#fff)"></div><div class="sl2" style="top:625px"></div>
<div class="f" style="left:1112px;top:625px;width:35px"></div><span class="t" style="left:1115px;top:625px">255</span>
<span class="t" style="left:979px;top:646px;color:#aaa">G</span>
<div class="sl" style="top:646px;background:linear-gradient(90deg,#f0f,#fff)"></div><div class="sl2" style="top:646px"></div>
<div class="f" style="left:1112px;top:646px;width:35px"></div><span class="t" style="left:1115px;top:646px">255</span>
<span class="t" style="left:979px;top:666px;color:#aaa">B</span>
<div class="sl" style="top:667px;background:linear-gradient(90deg,#ff0,#fff)"></div><div class="sl2" style="top:667px"></div>
<div class="f" style="left:1112px;top:667px;width:35px"></div><span class="t" style="left:1115px;top:666px">255</span>
<span class="t" style="left:979px;top:687px;color:#aaa">A</span>
<div class="sl" style="top:688px;background:linear-gradient(90deg,rgba(255,255,255,0),#fff 70%),repeating-conic-gradient(#bbb 0 25%,#fff 0 50%) 0 0/8px 8px"></div><div class="sl2" style="top:688px"></div>
<div class="f" style="left:1112px;top:688px;width:35px"></div><span class="t" style="left:1115px;top:687px">255</span>
<span class="t" style="left:979px;top:707px;color:#aaa">Hexadecimal</span>
<div class="f" style="left:1082px;top:708px;width:65px"></div><span class="t" style="left:1085px;top:707px;letter-spacing:.4px">FFFFFF</span>
<div class="gd" style="left:980px;top:732px"></div>
<span class="t" style="left:990px;top:726px;letter-spacing:.3px">Swatches</span>
<div class="d" style="left:1140px;top:728px"></div>
<div style="left:980px;top:743px;width:9px;height:9px;background:#222;border-radius:2px"></div>
<div style="left:982px;top:745px;width:5px;height:5px;background:#fff"></div>
<span class="t" style="left:995px;top:741px;color:#777;letter-spacing:.35px">Click to add new preset</span>
</div>
</body></html>
